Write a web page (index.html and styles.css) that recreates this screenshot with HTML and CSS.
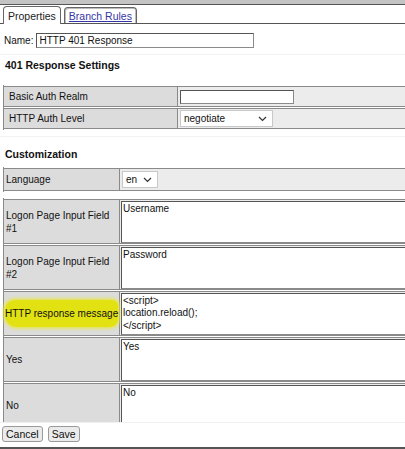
FILE: index.html
```html
<!DOCTYPE html>
<html lang="en">
<head>
    <meta charset="UTF-8">
    <title>HTTP 401 Response - Properties</title>
    <link rel="stylesheet" href="styles.css">
</head>
<body>

<div class="topbar"></div>

<div class="tabs">
    <span class="tab active">Properties</span>
    <a class="tab link" href="#">Branch Rules</a>
</div>

<div class="name-row">
    <label for="name">Name:</label>
    <input type="text" id="name" class="field name-input" value="HTTP 401 Response">
</div>

<div class="section first">
    <h3 class="section-title">401 Response Settings</h3>
    <table class="grid settings">
        <tr>
            <td class="key">Basic Auth Realm</td>
            <td class="val"><input type="text" class="field realm"></td>
        </tr>
        <tr>
            <td class="key">HTTP Auth Level</td>
            <td class="val">
                <div class="select auth-level">
                    <span>negotiate</span>
                    <svg width="9" height="6" viewBox="0 0 9 6"><path d="M1 1 L4.5 4.5 L8 1" fill="none" stroke="#333" stroke-width="1.2"/></svg>
                </div>
            </td>
        </tr>
    </table>
</div>

<div class="section second">
    <h3 class="section-title">Customization</h3>
</div>

<div class="scroll-box">
    <table class="grid custom lang">
        <tr>
            <td class="key">Language</td>
            <td class="val">
                <div class="select lang-select">
                    <span>en</span>
                    <svg width="9" height="6" viewBox="0 0 9 6"><path d="M1 1 L4.5 4.5 L8 1" fill="none" stroke="#333" stroke-width="1.2"/></svg>
                </div>
            </td>
        </tr>
    </table>
    <table class="grid custom">
        <tr>
            <td class="key">Logon Page Input Field #1</td>
            <td class="val"><textarea class="field">Username</textarea></td>
        </tr>
        <tr>
            <td class="key">Logon Page Input Field #2</td>
            <td class="val"><textarea class="field">Password</textarea></td>
        </tr>
        <tr>
            <td class="key"><span class="marker">HTTP response message</span></td>
            <td class="val"><textarea class="field">&lt;script&gt;
location.reload();
&lt;/script&gt;</textarea></td>
        </tr>
        <tr>
            <td class="key">Yes</td>
            <td class="val"><textarea class="field">Yes</textarea></td>
        </tr>
        <tr>
            <td class="key">No</td>
            <td class="val"><textarea class="field">No</textarea></td>
        </tr>
    </table>
</div>

<div class="actions">
    <button type="button" class="btn">Cancel</button>
    <button type="button" class="btn">Save</button>
</div>

</body>
</html>
```

FILE: styles.css
```css
* { box-sizing: border-box; }
html, body {
    margin: 0;
    overflow: hidden;
}
body {
    width: 405px;
    height: 449px;
    font-family: "Liberation Sans", Arial, sans-serif;
    font-size: 10px;
    color: #111;
    background: #fff;
    border-bottom: 2px solid #555;
}

.topbar {
    height: 5px;
    background: #c4c4c4;
    border-bottom: 1px solid #555;
}

/* tab strip */
.tabs {
    display: flex;
    align-items: flex-end;
    gap: 3px;
    height: 19px;
    padding-left: 3px;
    border-bottom: 1px solid #555;
}
.tab {
    display: flex;
    align-items: center;
    height: 17px;
    padding: 0 4px;
    border: 1px solid #666;
    border-bottom: none;
    border-radius: 4px 4px 0 0;
    background: #fff;
    color: #222;
    font-size: 10.5px;
}
.tab.active {
    margin-bottom: -1px;
    height: 18px;
}
.tab.link {
    height: 16px;
    color: #3535a8;
    box-shadow: inset 1px 1px 0 #bbb, inset -1px 0 0 #bbb;
}

.name-row {
    display: flex;
    align-items: center;
    gap: 3px;
    padding: 9px 0 0 4px;
}
.field {
    border: 1px solid #8a8a8a;
    border-top-color: #555;
    border-left-color: #555;
    background: #fff;
    font: inherit;
    color: #111;
    outline: none;
}
.name-input {
    width: 218px;
    height: 15px;
    padding: 0 2px;
}

.section {
    margin-top: 6px;
    border-top: 1px solid #f2f2f2;
    padding-left: 3px;
}
.section-title {
    margin: 0;
    padding: 4px 0 0 2px;
    height: 30px;
    font-size: 10.5px;
    font-weight: bold;
}
.second .section-title { padding-top: 11px; }

/* form grids */
.grid {
    border-collapse: separate;
    border-spacing: 0 1px;
    border-left: 1px solid #8a8a8a;
    table-layout: fixed;
}
.grid td {
    border-top: 1px solid #8a8a8a;
    border-bottom: 1px solid #8a8a8a;
    padding: 0;
    vertical-align: middle;
}
.grid .key {
    background: #dcdcdc;
    border-right: 1px solid #8a8a8a;
    padding: 0 5px;
}
.grid .val {
    background: #ececec;
    padding: 0 2px;
}

.settings {
    width: 440px;
    margin-bottom: 1px;
}
.settings .key { width: 174px; }
.settings td { height: 21px; }
.realm {
    width: 114px;
    height: 14px;
    display: block;
}

.select {
    display: flex;
    align-items: center;
    justify-content: space-between;
    height: 17px;
    padding: 0 5px 0 3px;
    background: #fff;
    border: 1px solid #c8c8c8;
}
.auth-level { width: 93px; }
.lang-select { width: 36px; }

.scroll-box {
    height: 256px;
    overflow: hidden;
    padding-left: 3px;
    border-bottom: 1px solid #f0f0f0;
}
.custom {
    width: 440px;
    margin-bottom: 5px;
}
.custom.lang { margin-bottom: 6px; }
.custom .key {
    width: 116px;
    padding: 0 1px 0 2px;
    line-height: 1.3;
}
.custom .val { padding: 0 1px; }
.custom td { height: 45px; }
.custom.lang td { height: 23px; }
.custom.lang .val { padding: 0 2px; }
.custom textarea {
    display: block;
    width: 100%;
    height: 42px;
    padding: 1px;
    resize: none;
    line-height: 1.25;
    overflow: hidden;
}

/* hand-drawn highlighter stroke behind the label */
.marker {
    display: inline-block;
    white-space: nowrap;
    margin-left: -1px;
    padding: 7px 0;
    background: #e2e212;
    border-radius: 10px 6px 8px 12px;
    box-shadow: 0 0 3px 2px rgba(230, 230, 70, 0.8);
}

.actions {
    display: flex;
    gap: 5px;
    padding: 3px 0 0 2px;
}
.btn {
    height: 16px;
    padding: 0 3px;
    font: inherit;
    font-size: 10.5px;
    color: #111;
    background: #ebebeb;
    border: 1px solid #9a9a9a;
    border-radius: 3px;
}
```
